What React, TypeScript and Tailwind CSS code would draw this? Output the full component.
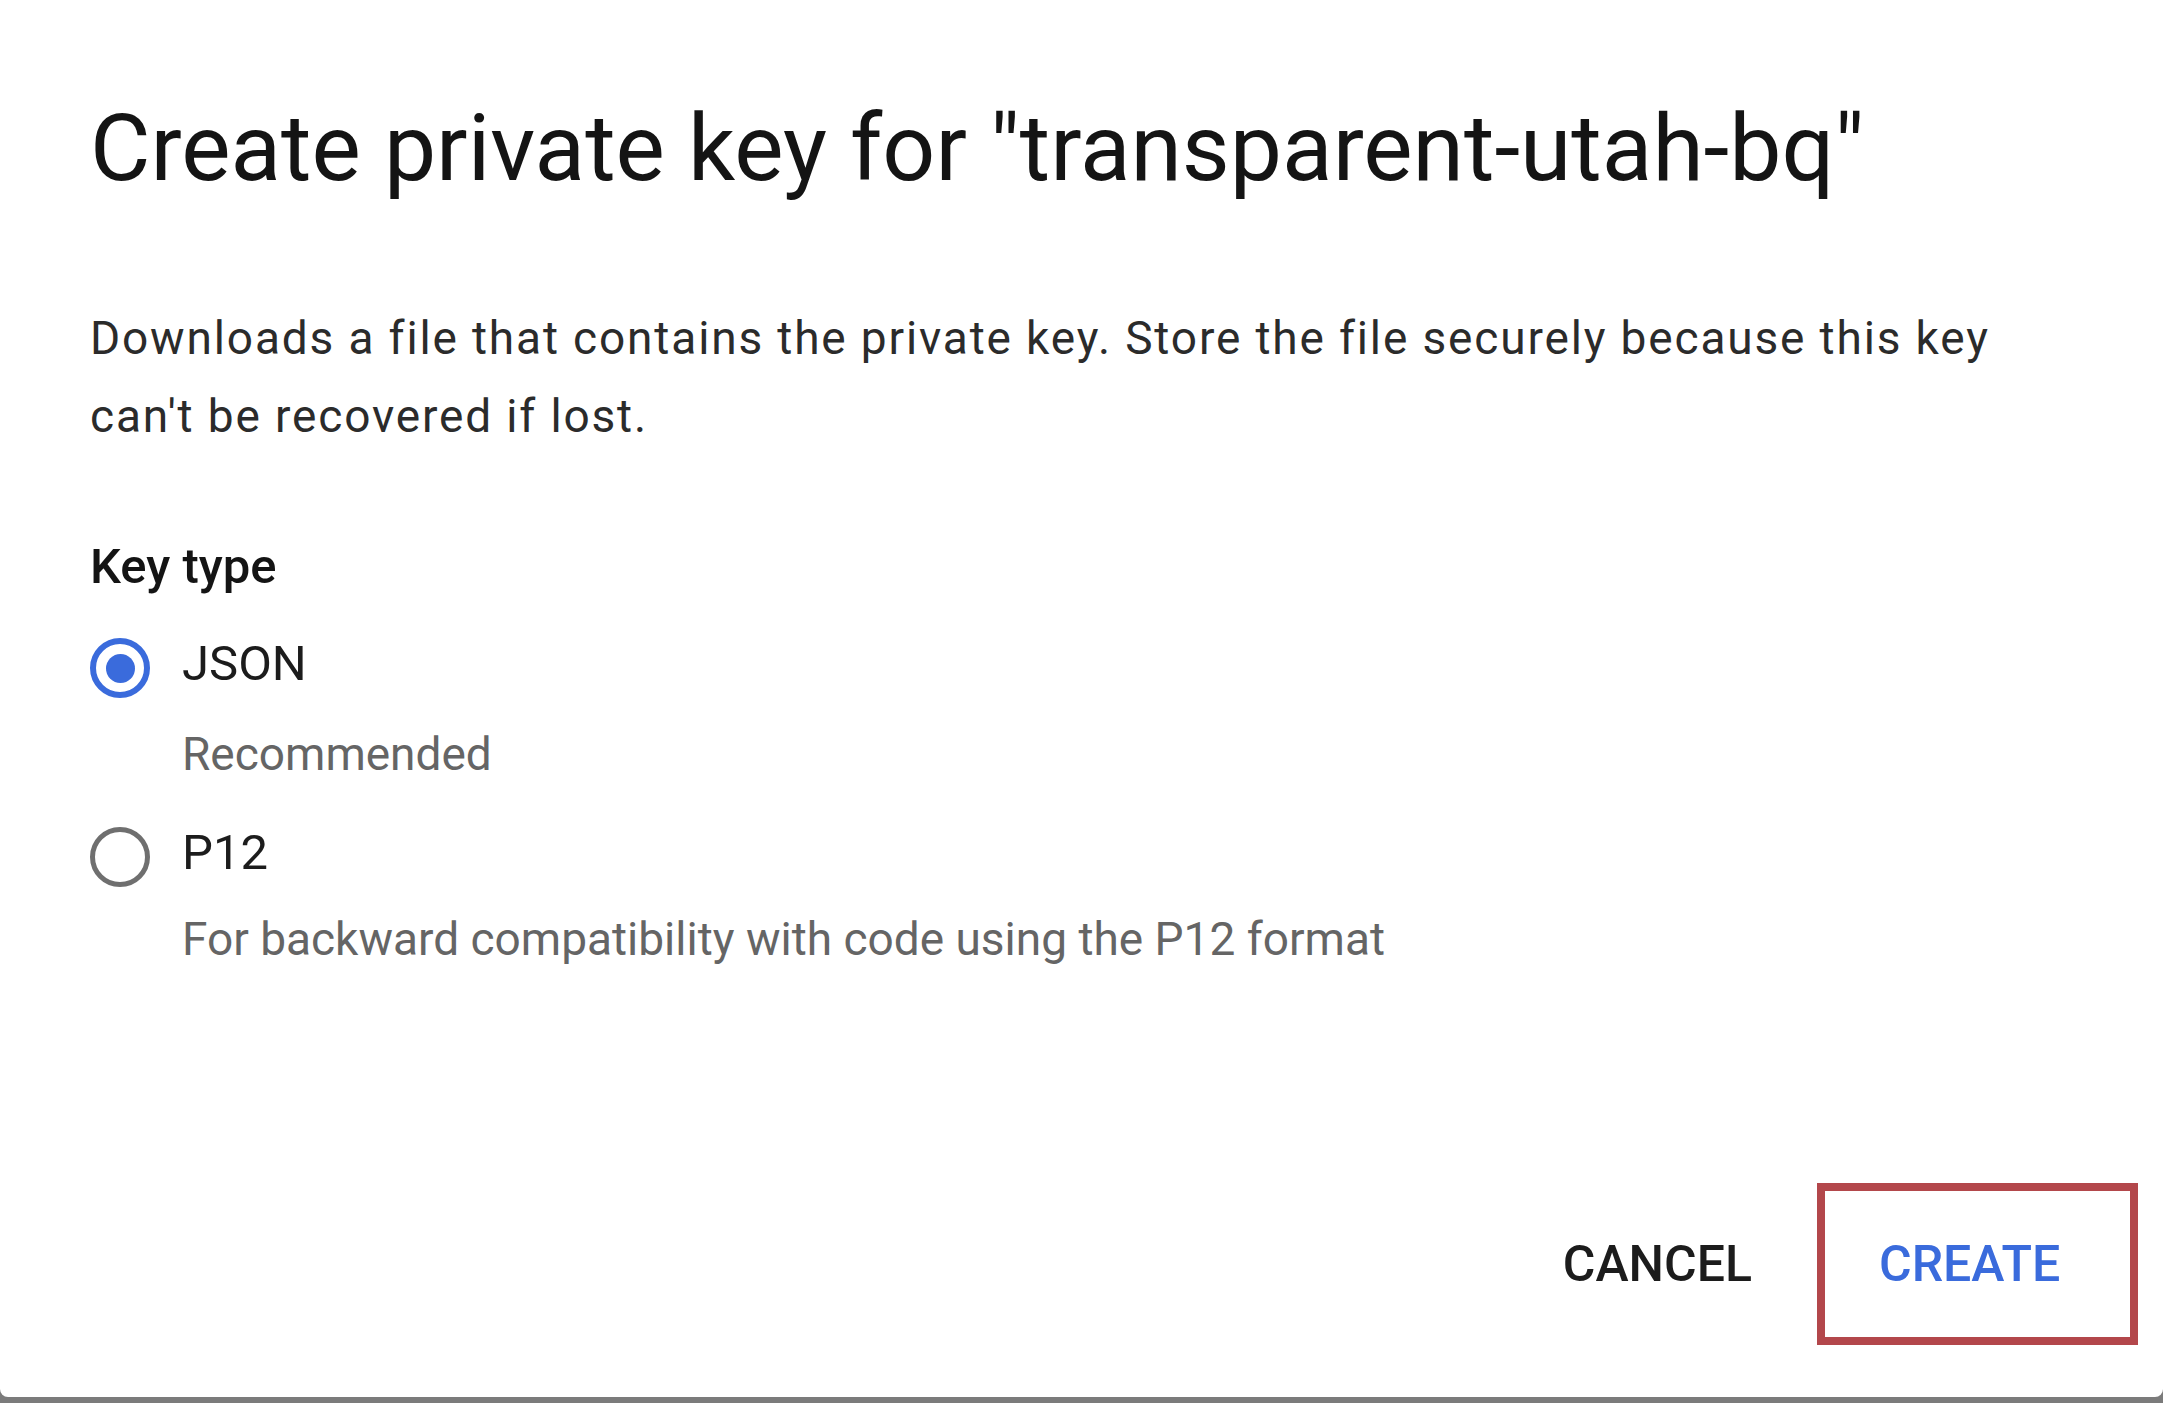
import React from 'react';

type KeyType = 'json' | 'p12';

const options: { id: KeyType; label: string; hint: string }[] = [
  { id: 'json', label: 'JSON', hint: 'Recommended' },
  { id: 'p12', label: 'P12', hint: 'For backward compatibility with code using the P12 format' },
];

function Radio({ checked }: { checked: boolean }) {
  return (
    <span
      className={
        checked
          ? 'mt-[4px] flex h-[60px] w-[60px] shrink-0 items-center justify-center rounded-full border-[6px] border-[#3a6bdc]'
          : 'mt-[4px] flex h-[60px] w-[60px] shrink-0 items-center justify-center rounded-full border-[5px] border-[#6f6f6f]'
      }
    >
      {checked && <span className="h-[29px] w-[29px] rounded-full bg-[#3a6bdc]" />}
    </span>
  );
}

export default function App() {
  const [keyType, setKeyType] = React.useState<KeyType>('json');

  return (
    <div className="flex h-[1403px] w-full flex-col bg-[#7b7b7b] font-['Roboto',sans-serif]">
      <div className="flex h-[1397px] flex-col rounded-b-[8px] bg-white pl-[90px]">
        <h1 className="mt-[99px] text-[93px] leading-[100px] font-normal text-[#141414]">
          Create private key for "transparent-utah-bq"
        </h1>

        <p className="mt-[100px] max-w-[2000px] text-[46px] leading-[78px] tracking-[1.85px] text-[#2b2b2b]">
          Downloads a file that contains the private key. Store the file securely because this key
          <br />
          can't be recovered if lost.
        </p>

        <div className="mt-[82px] text-[49px] leading-[60px] font-medium text-[#141414]">Key type</div>

        <div className="flex flex-col">
          {options.map((opt, i) => (
            <div key={opt.id} className={i === 0 ? 'mt-[37px]' : 'mt-[39px]'}>
              <label className="flex cursor-pointer items-start gap-[32px]" onClick={() => setKeyType(opt.id)}>
                <Radio checked={keyType === opt.id} />
                <span className="text-[49px] leading-[60px] text-[#1c1c1c]">{opt.label}</span>
              </label>
              <div
                className={
                  i === 0
                    ? 'mt-[26px] pl-[92px] text-[46px] leading-[60px] text-[#656565]'
                    : 'mt-[22px] pl-[92px] text-[46px] leading-[60px] text-[#656565]'
                }
              >
                {opt.hint}
              </div>
            </div>
          ))}
        </div>

        <div className="mt-auto flex items-center justify-end gap-[65px] pr-[25px] pb-[52px]">
          <button className="text-[50px] leading-[50px] font-medium text-[#1c1c1c]">CANCEL</button>
          <button className="flex h-[162px] w-[321px] items-center border-[8px] border-[#b3474b] pl-[54px] text-[50px] leading-[50px] font-medium text-[#3a6bdc]">
            CREATE
          </button>
        </div>
      </div>
    </div>
  );
}
